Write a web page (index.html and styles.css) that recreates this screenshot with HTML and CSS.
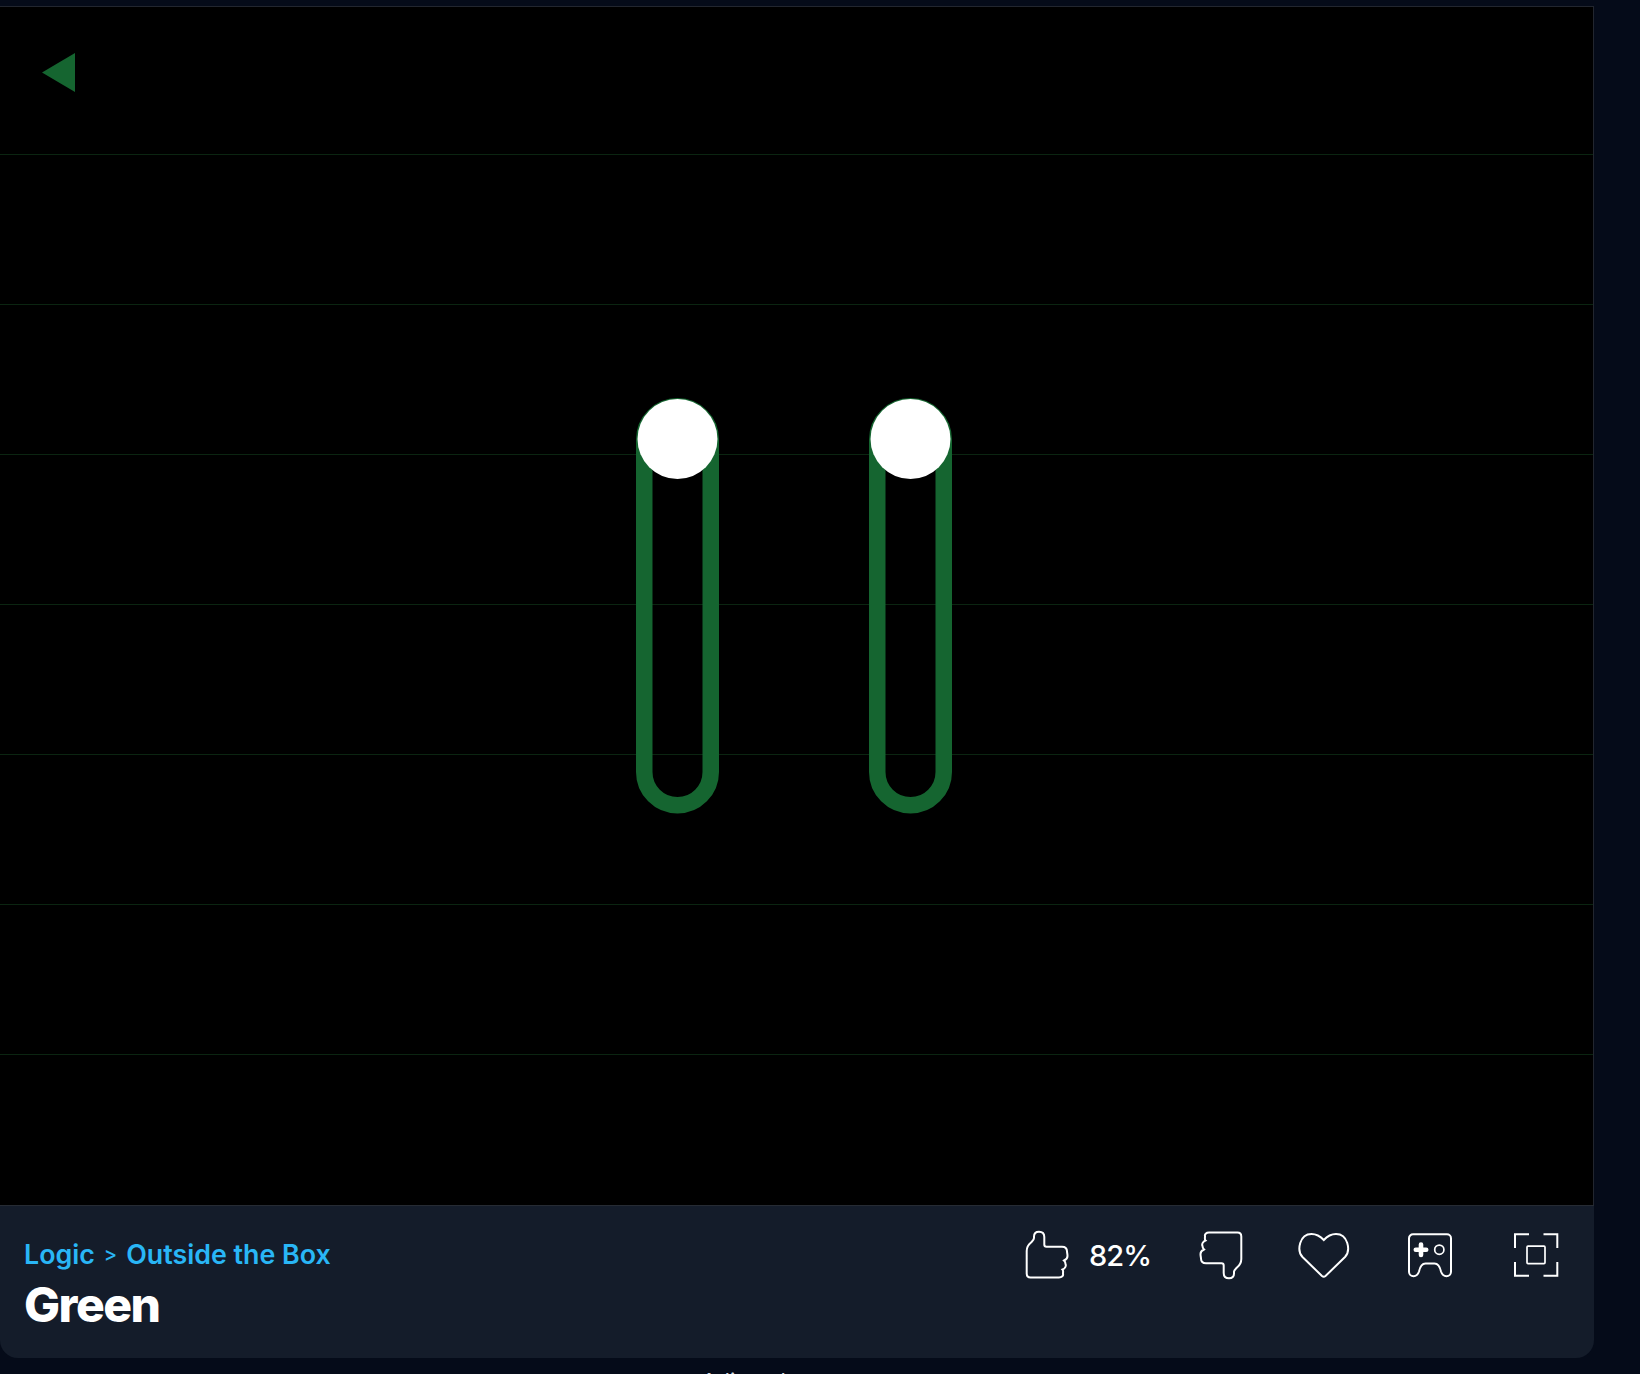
FILE: index.html
```html
<!DOCTYPE html>
<html lang="en">
<head>
<meta charset="utf-8">
<title>Green</title>
<link rel="stylesheet" href="styles.css">
</head>
<body>
<main class="page">
  <section class="player">
    <div class="stage">
      <div class="row"></div><div class="row"></div><div class="row"></div><div class="row"></div>
      <div class="row"></div><div class="row"></div><div class="row"></div><div class="row"></div>
      <svg class="back" viewBox="0 0 33 39"><polygon points="33,0 33,39 0,19.5"/></svg>
      <svg class="slider slider-left" viewBox="0 0 83 416"><rect class="groove" x="8.25" y="8.25" width="66.5" height="399" rx="33.25"/><circle class="knob" cx="41.5" cy="41" r="40"/></svg>
      <svg class="slider slider-right" viewBox="0 0 83 416"><rect class="groove" x="8.25" y="8.25" width="66.5" height="399" rx="33.25"/><circle class="knob" cx="41.5" cy="41" r="40"/></svg>
    </div>
    <footer class="bar">
      <div class="info">
        <div class="crumbs"><span>Logic</span><span class="sep">&gt;</span><span>Outside the Box</span></div>
        <h1 class="title">Green</h1>
      </div>
      <div class="actions">
        <div class="rating">
          <svg class="icon" viewBox="0 0 50 50"><path d="M8.5 47.5H37C40 47.5 41.5 45.5 41 44C41 41.5 41.5 40.5 40.5 39.5C43 38.5 44.5 36 43.5 34C43.5 32.5 42.5 31 42 30.5C44.5 29.5 45.5 27.5 45.5 26C45.5 24 45 22.5 45 21.5C45 18.5 43 16.7 40 16.7H24.5C23 16.7 22.3 16 22.3 14.5V7C22.3 3.5 20 1.7 17 1.7C14 1.7 12 3.5 12 6.5V8C12 10 10.5 11 9 12.5C6.5 14.5 4.7 17 4.7 21V43.5C4.7 46 6 47.5 8.5 47.5Z"/></svg>
          <span class="percent">82%</span>
        </div>
        <svg class="icon" viewBox="0 0 50 50"><g transform="rotate(180 25 25)"><path d="M8.5 47.5H37C40 47.5 41.5 45.5 41 44C41 41.5 41.5 40.5 40.5 39.5C43 38.5 44.5 36 43.5 34C43.5 32.5 42.5 31 42 30.5C44.5 29.5 45.5 27.5 45.5 26C45.5 24 45 22.5 45 21.5C45 18.5 43 16.7 40 16.7H24.5C23 16.7 22.3 16 22.3 14.5V7C22.3 3.5 20 1.7 17 1.7C14 1.7 12 3.5 12 6.5V8C12 10 10.5 11 9 12.5C6.5 14.5 4.7 17 4.7 21V43.5C4.7 46 6 47.5 8.5 47.5Z"/></g></svg>
        <svg class="icon" viewBox="0 0 50 50"><path d="M21 46L1.5 27C-4.5 20.5 -1.5 4 10.5 4C15.5 4 19.5 6.5 22.8 10C26 6.5 30 4 35 4C47 4 50 20.5 44 27L24.5 46C23.5 46.8 22 46.8 21 46Z"/></svg>
        <svg class="icon" viewBox="0 0 50 50"><g transform="translate(-1 0)"><path d="M8 4.3H42A4 4 0 0 1 46 8.3V42A4.5 4.5 0 0 1 41.5 46.2C38.5 46.2 37 44.5 36 41.5C35 37 33 33.5 29.5 33.5H20.5C17 33.5 15 37 14 41.5C13 44.5 11.5 46.2 8.5 46.2A4.5 4.5 0 0 1 4 42V8.3A4 4 0 0 1 8 4.3Z"/><path class="plus" d="M16 14.5V25M10.8 19.7H21.2"/><circle class="thin" cx="34.3" cy="19.7" r="4.6"/></g></svg>
        <svg class="icon" viewBox="0 0 50 50"><path class="square" d="M4 18V4.3H18M32.5 4.3H46.3V18M46.3 32V45.7H32.5M18 45.7H4V32"/><rect class="thin" x="16" y="16.2" width="18" height="17.4" rx="1"/></svg>
      </div>
    </footer>
  </section>
  <p class="hint">Adjust the amount</p>
</main>
</body>
</html>
```
FILE: styles.css
```css
* { box-sizing: border-box; }
html, body { margin: 0; height: 100%; }
body {
  background: #050b19;
  color: #fff;
  font-family: Inter, "Noto Sans", sans-serif;
  overflow: hidden;
}
.page { height: 1374px; overflow: hidden; padding-top: 6px; }
.player { width: 1594px; }
.stage {
  position: relative;
  height: 1199px;
  background: #000;
  border-top: 1px solid #22262f;
  border-right: 1px solid #22262f;
}
.row { height: 150px; border-bottom: 1px solid #0b2511; }
.row:first-child { height: 148px; }
.row:last-of-type { border-bottom: 0; }
.back {
  position: absolute;
  left: 41.5px;
  top: 46px;
  width: 33px;
  height: 39px;
  fill: #156530;
}
.slider {
  position: absolute;
  top: 391.3px;
  width: 83px;
  height: 416px;
}
.slider-left { left: 636px; }
.slider-right { left: 869.3px; }
.groove { fill: none; stroke: #156530; stroke-width: 16.5; }
.knob { fill: #fff; }
.bar {
  display: flex;
  justify-content: space-between;
  align-items: flex-start;
  height: 153px;
  padding: 24px 33px 0 24px;
  background: #141c2a;
  border-top: 1px solid #262b33;
  border-radius: 0 0 18px 18px;
}
.info { display: flex; flex-direction: column; }
.crumbs {
  display: flex;
  gap: 9px;
  align-items: center;
  color: #29b6f6;
  font-size: 26.8px;
  line-height: 48px;
  font-weight: 600;
}
.sep { font-size: 20px; font-weight: 500; }
.title {
  margin: 0;
  font-size: 48px;
  line-height: 54px;
  font-weight: 800;
  letter-spacing: -1.5px;
}
.actions { display: flex; align-items: center; gap: 55px; }
.rating { display: flex; align-items: center; gap: 17px; margin-right: -10px; }
.percent { font-size: 29px; font-weight: 500; letter-spacing: -1px; }
.icon {
  display: block;
  width: 50px;
  height: 50px;
  fill: none;
  stroke: #fff;
  stroke-width: 2;
  overflow: visible;
}
.icon .plus { stroke-width: 4.6; stroke-linecap: round; }
.icon .thin { stroke-width: 1.7; }
.hint {
  margin: 10px 0 0;
  padding-right: 48px;
  text-align: center;
  font-size: 22px;
  line-height: 27px;
  color: #d8dbe0;
}
```
